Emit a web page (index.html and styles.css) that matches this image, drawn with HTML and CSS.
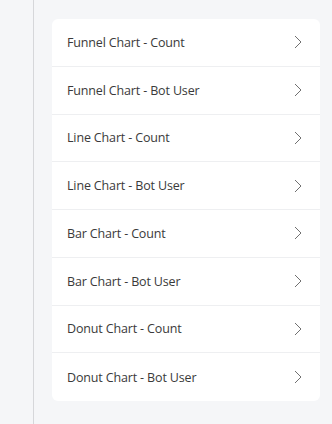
FILE: index.html
```html
<!DOCTYPE html>
<html lang="en">
<head>
    <meta charset="UTF-8">
    <meta name="viewport" content="width=device-width, initial-scale=1.0">
    <title>Charts</title>
    <link rel="stylesheet" href="styles.css">
</head>
<body>
    <div class="layout">
        <aside class="sidebar"></aside>
        <main class="content">
            <ul class="chart-list">
                <li class="chart-item"><span>Funnel Chart - Count</span><svg class="chevron" viewBox="0 0 8 14"><path d="M1 1l6 6-6 6"/></svg></li>
                <li class="chart-item"><span>Funnel Chart - Bot User</span><svg class="chevron" viewBox="0 0 8 14"><path d="M1 1l6 6-6 6"/></svg></li>
                <li class="chart-item"><span>Line Chart - Count</span><svg class="chevron" viewBox="0 0 8 14"><path d="M1 1l6 6-6 6"/></svg></li>
                <li class="chart-item"><span>Line Chart - Bot User</span><svg class="chevron" viewBox="0 0 8 14"><path d="M1 1l6 6-6 6"/></svg></li>
                <li class="chart-item"><span>Bar Chart - Count</span><svg class="chevron" viewBox="0 0 8 14"><path d="M1 1l6 6-6 6"/></svg></li>
                <li class="chart-item"><span>Bar Chart - Bot User</span><svg class="chevron" viewBox="0 0 8 14"><path d="M1 1l6 6-6 6"/></svg></li>
                <li class="chart-item"><span>Donut Chart - Count</span><svg class="chevron" viewBox="0 0 8 14"><path d="M1 1l6 6-6 6"/></svg></li>
                <li class="chart-item"><span>Donut Chart - Bot User</span><svg class="chevron" viewBox="0 0 8 14"><path d="M1 1l6 6-6 6"/></svg></li>
            </ul>
        </main>
    </div>
</body>
</html>
```

FILE: styles.css
```css
* {
    margin: 0;
    padding: 0;
    box-sizing: border-box;
}
body {
    background: #f5f6f8;
    font-family: "Open Sans", "Noto Sans", sans-serif;
    color: #3a3a3a;
}
.layout {
    display: flex;
    min-height: 424px;
}
.sidebar {
    width: 34px;
    border-right: 1px solid #d6d7da;
}
.content {
    flex: 1;
    padding: 19px 12px 0 18px;
}
.chart-list {
    list-style: none;
    background: #fff;
    border-radius: 6px;
}
.chart-item {
    display: flex;
    align-items: center;
    justify-content: space-between;
    height: 47.75px;
    padding: 0 18px 0 15px;
    border-bottom: 1px solid #eeeff1;
    font-size: 12.5px;
    letter-spacing: -0.15px;
}
.chart-item:last-child {
    border-bottom: none;
}
.chevron {
    width: 8px;
    height: 14px;
    fill: none;
    stroke: #707070;
    stroke-width: 1;
}
```
